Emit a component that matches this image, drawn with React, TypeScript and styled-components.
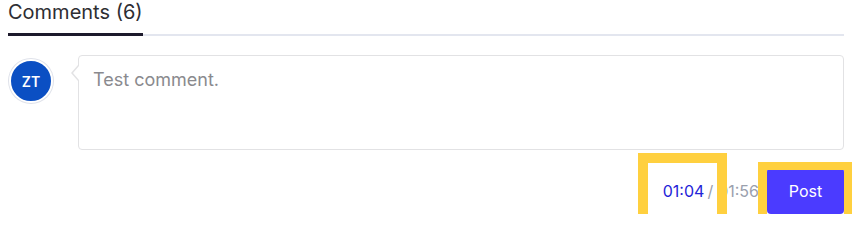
import React from 'react'
import styled, { createGlobalStyle } from 'styled-components'

const GlobalStyle = createGlobalStyle`
    body {
        margin: 0;
        background: #ffffff;
        font-family: Inter, "Noto Sans", sans-serif;
    }
`

const Container = styled.div`
    padding: 0 11px 0 8px;
`
const TabBar = styled.div`
    display: flex;
    border-bottom: 2px solid #e3e6ef;
`
const Tab = styled.div<{ $active?: boolean }>`
    padding: 0 0 9px;
    margin-bottom: -2px;
    font-size: 20px;
    line-height: 24px;
    color: #2e2e33;
    border-bottom: 3px solid ${(p) => (p.$active ? '#1d1a2c' : 'transparent')};
`
const CommentRow = styled.div`
    display: flex;
    align-items: flex-start;
    gap: 25px;
    margin-top: 19px;
`
const Avatar = styled.div`
    width: 40px;
    height: 40px;
    margin: 4px 0 0 1px;
    flex: none;
    border-radius: 50%;
    border: 2px solid #ffffff;
    box-shadow: 0 0 0 1px #dfe2ea;
    background: #0b4fc3;
    color: #ffffff;
    font-size: 14px;
    font-weight: 600;
    display: flex;
    align-items: center;
    justify-content: center;
`
const EditorWrap = styled.div`
    position: relative;
    flex: 1;
    display: flex;

    &::before,
    &::after {
        content: '';
        position: absolute;
        top: 10px;
        width: 0;
        height: 0;
        border-style: solid;
        border-color: transparent;
    }
    &::before {
        left: -7px;
        border-width: 8px 7px 8px 0;
        border-right-color: #e2e2e4;
    }
    &::after {
        left: -5px;
        top: 11px;
        border-width: 7px 6px 7px 0;
        border-right-color: #ffffff;
    }
`
const Editor = styled.textarea`
    flex: 1;
    height: 95px;
    box-sizing: border-box;
    padding: 12px 14px;
    border: 1px solid #e2e2e4;
    border-radius: 4px;
    resize: none;
    outline: none;
    font-family: inherit;
    font-size: 18px;
    line-height: 24px;
    color: #333;

    &::placeholder {
        color: #8a8a8e;
    }
`
const Footer = styled.div`
    position: relative;
    display: flex;
    justify-content: flex-end;
    align-items: center;
    margin-top: 18px;
`
const Timer = styled.div`
    margin-right: 8px;
    font-size: 16px;
    line-height: 20px;
    color: #9aa0ad;
`
const CurrentTime = styled.span`
    color: #2424d8;
`
const Slash = styled.span`
    margin: 0 5px 0 3px;
`
const Highlight = styled.div`
    position: absolute;
    right: 117px;
    top: -15px;
    width: 89px;
    height: 74px;
    box-sizing: border-box;
    border: 10px solid #ffd03f;
    pointer-events: none;
`
const PostButton = styled.button`
    position: relative;
    width: 77px;
    height: 46px;
    border: none;
    border-radius: 4px;
    background: #4b3bff;
    color: #ffffff;
    font-family: inherit;
    font-size: 16px;
    cursor: pointer;

    &::after {
        content: '';
        position: absolute;
        top: -6px;
        left: -9px;
        right: -8px;
        bottom: -8px;
        border-style: solid;
        border-color: #ffd03f;
        border-width: 8px 8px 8px 9px;
        pointer-events: none;
    }
`

const App: React.FC = () => {
    return (
        <Container>
            <GlobalStyle />
            <TabBar>
                <Tab $active>Comments (6)</Tab>
            </TabBar>
            <CommentRow>
                <Avatar>ZT</Avatar>
                <EditorWrap>
                    <Editor placeholder="Test comment." />
                </EditorWrap>
            </CommentRow>
            <Footer>
                <Timer>
                    <CurrentTime>01:04</CurrentTime>
                    <Slash>/</Slash>
                    <span>01:56</span>
                </Timer>
                <PostButton>Post</PostButton>
                <Highlight />
            </Footer>
        </Container>
    )
}

export default App
